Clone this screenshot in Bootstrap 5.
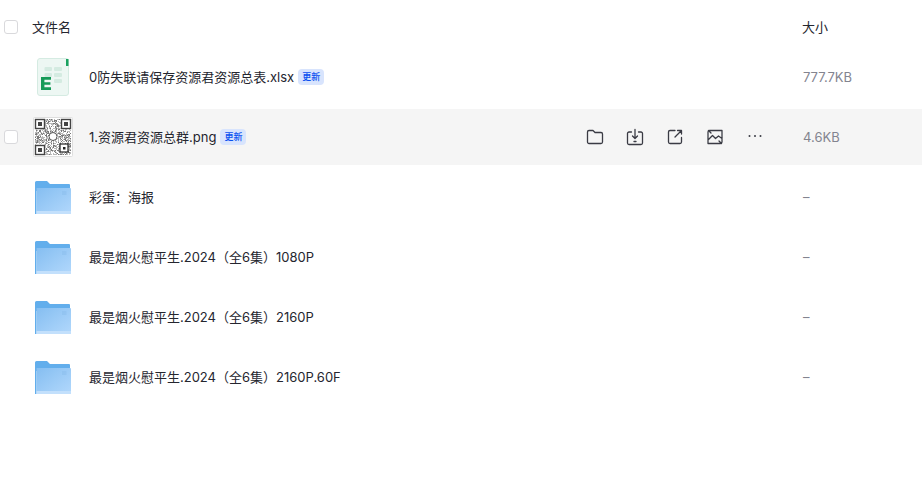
<!DOCTYPE html>
<html lang="zh-CN">
<head>
    <meta charset="UTF-8">
    <meta name="viewport" content="width=device-width, initial-scale=1.0">
    <title>文件列表</title>
    <link rel="stylesheet" href="https://cdn.jsdelivr.net/npm/bootstrap@5.3.0/dist/css/bootstrap.min.css">
    <style>
        body {
            background-color: #fff;
            font-family: "Inter", "Noto Sans CJK SC", sans-serif;
            font-size: 13px;
            color: #25262f;
            overflow: hidden;
        }
        .file-head {
            height: 47px;
            padding-top: 7px;
            margin-bottom: 2px;
        }
        .file-row {
            height: 56px;
            margin-bottom: 4px;
        }
        .file-row.is-active {
            background-color: #f5f5f5;
        }
        .check-col {
            width: 32px;
            padding-left: 4px;
            flex: none;
        }
        .check-box {
            display: block;
            width: 14px;
            height: 14px;
            border: 1px solid #d9d9dc;
            border-radius: 3px;
            background-color: #fff;
        }
        .thumb-col {
            width: 57px;
            flex: none;
            padding-left: 2px;
        }
        .thumb-col svg {
            display: block;
        }
        .thumb-folder {
            margin: 2px 0 0 1px;
        }
        .thumb-qr {
            margin-left: -1px;
        }
        .name-col {
            flex: 1 1 auto;
            min-width: 0;
            padding-top: 2px;
        }
        .size-col {
            width: 119px;
            flex: none;
            padding-top: 2px;
            color: #83848f;
        }
        .head-size {
            width: 120px;
            color: #25262f;
            padding-top: 1px;
        }
        .tag-new {
            font-size: 9px;
            font-weight: 500;
            line-height: 16px;
            height: 16px;
            padding: 0 4px;
            margin: -2px 0 0 4px;
            border-radius: 4px;
            background-color: #d8e4fd;
            color: #0a50f0;
        }
        .row-tools {
            gap: 20px;
            margin-right: 38px;
        }
        .row-tools svg {
            display: block;
            width: 20px;
            height: 20px;
            fill: none;
            stroke: #3a3b44;
            stroke-width: 1.3;
            stroke-linecap: round;
            stroke-linejoin: round;
        }
    </style>
</head>
<body>
    <svg width="0" height="0" class="position-absolute">
        <defs>
            <linearGradient id="folderFront" x1="0" y1="0" x2="1" y2="1">
                <stop offset="0" stop-color="#85bef1"/>
                <stop offset="1" stop-color="#b2d8fc"/>
            </linearGradient>
            <symbol id="folderIcon" viewBox="0 0 36 34">
                <path d="M0 1.500A1.500 1.500 0 0 1 1.500 0H12l3 3H34a1 1 0 0 1 1 1V10H1.500V33H0z" fill="#62aeec"/>
                <path d="M1.500 7H35a1 1 0 0 1 1 1V33H1.500z" fill="url(#folderFront)"/>
                <rect x="1.500" y="30" width="34.500" height="3" fill="#c3e0fc"/>
                <path d="M27 11h4.500M27 13h4.500" stroke="#8abdec" stroke-width="1"/>
            </symbol>
        </defs>
    </svg>

    <div class="d-flex align-items-center file-head">
        <div class="check-col"><span class="check-box"></span></div>
        <div class="name-col">文件名</div>
        <div class="size-col head-size">大小</div>
    </div>

    <div class="d-flex align-items-center file-row">
        <div class="check-col"></div>
        <div class="thumb-col">
            <svg width="36" height="40" viewBox="1 0 36 40">
                <rect x="4.500" y="1.500" width="31" height="37" rx="2.500" fill="#edf7f3" stroke="#d5ebe2"/>
                <rect x="33" y="2" width="2.500" height="7" fill="#1aa260"/>
                <g fill="#d4ebe1">
                    <rect x="11.500" y="10" width="7.500" height="4" rx="1"/>
                    <rect x="21" y="10" width="8" height="4" rx="1"/>
                    <rect x="11.500" y="16" width="7.500" height="4" rx="1"/>
                    <rect x="21" y="16" width="8" height="4" rx="1"/>
                    <rect x="21" y="22" width="8" height="4" rx="1"/>
                </g>
                <path d="M8 20h10v2.800h-6.600v2.400h6v2.600h-6v2.500H18V33H8z" fill="#159b58"/>
            </svg>
        </div>
        <div class="name-col d-flex align-items-center">0防失联请保存资源君资源总表.xlsx<span class="tag-new">更新</span></div>
        <div class="size-col">777.7KB</div>
    </div>

    <div class="d-flex align-items-center file-row is-active">
        <div class="check-col"><span class="check-box"></span></div>
        <div class="thumb-col">
            <svg id="qrThumb" width="40" height="40" viewBox="0 0 40 40" class="thumb-qr"></svg>
        </div>
        <div class="name-col d-flex align-items-center">1.资源君资源总群.png<span class="tag-new">更新</span></div>
        <div class="d-flex row-tools">
            <svg viewBox="0 0 20 20"><path d="M2.500 5A1.500 1.500 0 0 1 4 3.500H8L10 5.500H16A1.500 1.500 0 0 1 17.500 7V15A1.500 1.500 0 0 1 16 16.500H4A1.500 1.500 0 0 1 2.500 15z"/></svg>
            <svg viewBox="0 0 20 20"><path d="M6.500 5H4A1.500 1.500 0 0 0 2.500 6.500V16A1.500 1.500 0 0 0 4 17.500H16A1.500 1.500 0 0 0 17.500 16V6.500A1.500 1.500 0 0 0 16 5H13.500M10 2.500V11M7.500 9L10 11.500 12.500 9M9 14.500h2"/></svg>
            <svg viewBox="0 0 20 20"><path d="M10 3.500H5A1.500 1.500 0 0 0 3.500 5V15A1.500 1.500 0 0 0 5 16.500H15A1.500 1.500 0 0 0 16.500 15V10.500M10 10L16.500 3.500M12.500 3.500H16.500V7"/></svg>
            <svg viewBox="0 0 20 20"><path d="M3 6V5A1.500 1.500 0 0 1 4.500 3.500H13M3.500 3.500L6 6M17 14V15A1.500 1.500 0 0 1 15.500 16.500H7M16.500 16.500L14 14M3 6V16.500H7M17 14V3.500H13M3 13L7.500 8.500 10.500 11.500 13.500 9 17 11.500"/></svg>
            <svg viewBox="0 0 20 20"><g fill="#3a3b44" stroke="none"><circle cx="4.500" cy="9" r="1"/><circle cx="10" cy="9" r="1"/><circle cx="15.500" cy="9" r="1"/></g></svg>
        </div>
        <div class="size-col">4.6KB</div>
    </div>

    <div class="d-flex align-items-center file-row">
        <div class="check-col"></div>
        <div class="thumb-col"><svg width="36" height="34" class="thumb-folder"><use href="#folderIcon"/></svg></div>
        <div class="name-col">彩蛋：海报</div>
        <div class="size-col">–</div>
    </div>
    <div class="d-flex align-items-center file-row">
        <div class="check-col"></div>
        <div class="thumb-col"><svg width="36" height="34" class="thumb-folder"><use href="#folderIcon"/></svg></div>
        <div class="name-col">最是烟火慰平生.2024（全6集）1080P</div>
        <div class="size-col">–</div>
    </div>
    <div class="d-flex align-items-center file-row">
        <div class="check-col"></div>
        <div class="thumb-col"><svg width="36" height="34" class="thumb-folder"><use href="#folderIcon"/></svg></div>
        <div class="name-col">最是烟火慰平生.2024（全6集）2160P</div>
        <div class="size-col">–</div>
    </div>
    <div class="d-flex align-items-center file-row">
        <div class="check-col"></div>
        <div class="thumb-col"><svg width="36" height="34" class="thumb-folder"><use href="#folderIcon"/></svg></div>
        <div class="name-col">最是烟火慰平生.2024（全6集）2160P.60F</div>
        <div class="size-col">–</div>
    </div>

    <script src="https://cdn.jsdelivr.net/npm/bootstrap@5.3.0/dist/js/bootstrap.bundle.min.js"></script>
    <script>
        // QR thumbnail: pseudo-random modules plus the three corner markers
        const qr = document.getElementById('qrThumb');
        let out = '<rect x="0.5" y="0.5" width="39" height="39" rx="1" fill="#fff" stroke="#dedede"/>';
        let seed = 7;
        function rnd() {
            seed = (seed * 16807) % 2147483647;
            return seed / 2147483647;
        }
        for (let y = 0; y < 36; y += 1) {
            for (let x = 0; x < 36; x += 1) {
                if (rnd() > 0.35) {
                    const shade = rnd() > 0.7 ? '#777' : '#b8b8b8';
                    out += `<rect x="${2 + x}" y="${2 + y}" width="1" height="1" fill="${shade}"/>`;
                }
            }
        }
        [[2, 2], [28, 2], [2, 28]].forEach(([x, y]) => {
            out += `<rect x="${x - 0.5}" y="${y - 0.5}" width="11" height="11" fill="#fff"/>`;
            out += `<rect x="${x + 0.5}" y="${y + 0.5}" width="9" height="9" fill="none" stroke="#444" stroke-width="1.4"/>`;
            out += `<rect x="${x + 3}" y="${y + 3}" width="4" height="4" fill="#444"/>`;
        });
        out += '<rect x="27" y="27" width="8" height="8" fill="#fff" stroke="#222" stroke-width="1.2"/><rect x="30" y="30" width="2.500" height="2.500" fill="#222"/>';
        out += '<circle cx="20" cy="19.500" r="4" fill="#fff" stroke="#555" stroke-width="1"/>';
        qr.innerHTML = out;
    </script>
</body>
</html>
